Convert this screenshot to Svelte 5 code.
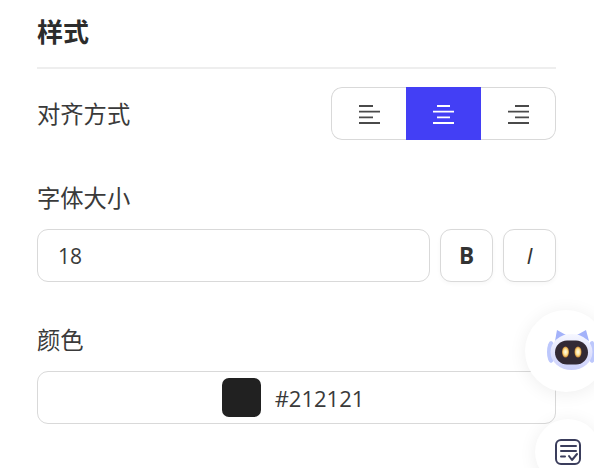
<script lang="ts">
  // Style panel: alignment, font size and colour controls, plus floating helper buttons.
  let align = $state('center');
  let fontSize = $state('18');
  const alignments = [
    { id: 'left', lines: ['M0 1h14', 'M0 6.7h21', 'M0 12.4h14', 'M0 18h21'] },
    { id: 'center', lines: ['M4 1h13', 'M0 6.7h21', 'M4 12.4h13', 'M0 18h21'] },
    { id: 'right', lines: ['M7 1h14', 'M0 6.7h21', 'M7 12.4h14', 'M0 18h21'] },
  ];
</script>

<div class="panel">
  <h2 class="title">样式</h2>

  <div class="row align-row">
    <span class="label">对齐方式</span>
    <div class="segments">
      {#each alignments as a (a.id)}
        <button class="segment" class:active={align === a.id} onclick={() => (align = a.id)} aria-label={a.id}>
          <svg width="21" height="19" viewBox="0 0 21 19" fill="none" stroke="currentColor" stroke-width="1.8">
            {#each a.lines as d}<path {d} />{/each}
          </svg>
        </button>
      {/each}
    </div>
  </div>

  <div class="field size-field">
    <span class="label">字体大小</span>
    <div class="size-row">
      <input class="size-input" bind:value={fontSize} />
      <button class="square bold">B</button>
      <button class="square italic">I</button>
    </div>
  </div>

  <div class="field color-field">
    <span class="label">颜色</span>
    <div class="color-box">
      <span class="swatch"></span>
      <span class="hex">#212121</span>
    </div>
  </div>
</div>

<div class="float bot">
  <svg width="47" height="42" viewBox="0 0 47 42">
    <defs>
      <linearGradient id="head" x1="0" y1="0" x2="0" y2="1">
        <stop offset="0" stop-color="#f6f7ff" />
        <stop offset="1" stop-color="#ccd0fb" />
      </linearGradient>
      <radialGradient id="eye">
        <stop offset="0" stop-color="#fffdf0" />
        <stop offset="0.6" stop-color="#ffe08e" />
        <stop offset="1" stop-color="#c9822c" />
      </radialGradient>
    </defs>
    <path d="M8 11 L10 0 L19 5 Z" fill="#a3b2fa" />
    <path d="M42 11 L39 0 L30 5 Z" fill="#a3b2fa" />
    <ellipse cx="4" cy="22" rx="4" ry="11" fill="#bcc7fc" />
    <ellipse cx="45" cy="22" rx="4" ry="11" fill="#bcc7fc" />
    <ellipse cx="24.5" cy="22" rx="21" ry="18" fill="url(#head)" />
    <rect x="8" y="10.5" width="33" height="24" rx="12" fill="#332a35" />
    <ellipse cx="18.5" cy="22" rx="3.5" ry="5.5" fill="url(#eye)" />
    <ellipse cx="31" cy="22" rx="3.5" ry="5.5" fill="url(#eye)" />
  </svg>
</div>

<div class="float notes">
  <svg width="28" height="28" viewBox="0 0 28 28" fill="none" stroke="#3a3d5c" stroke-width="2" stroke-linecap="round" stroke-linejoin="round">
    <rect x="2" y="2" width="24" height="24" rx="5" />
    <path d="M7 8h15M7 13h15M7 18.5h4M15 18l3 4 5-6" />
  </svg>
</div>

<style>
  :global(body) {
    margin: 0;
    background: #fff;
    overflow: hidden;
    height: 468px;
    font-family: "Open Sans", "Noto Sans CJK SC", sans-serif;
    color: #333;
  }

  .panel {
    padding: 0 38px 0 37px;
  }

  .title {
    margin: 0;
    height: 69px;
    box-sizing: border-box;
    padding: 13px 0 0;
    font-size: 26px;
    line-height: 38px;
    font-weight: 700;
    color: #2c2c2c;
    border-bottom: 2px solid #eeeeee;
  }

  .label {
    font-size: 23.3px;
    line-height: 34px;
    color: #3a3a3a;
  }

  .row {
    display: flex;
    align-items: center;
    justify-content: space-between;
  }

  .align-row {
    margin-top: 18px;
  }

  .segments {
    display: flex;
    height: 53px;
    width: 225px;
    border-radius: 11px;
    overflow: hidden;
  }

  .segment {
    width: 75px;
    box-sizing: border-box;
    padding: 0;
    border: 1px solid #d9d9d9;
    border-width: 1px 0;
    background: #fff;
    color: #4a4a4a;
    display: flex;
    align-items: center;
    justify-content: center;
  }

  .segment svg {
    margin-top: 2px;
  }

  .segment:first-child {
    border-left-width: 1px;
    border-radius: 11px 0 0 11px;
  }

  .segment:last-child {
    border-right-width: 1px;
    border-radius: 0 11px 11px 0;
  }

  .segment.active {
    background: #433ff5;
    border-color: #433ff5;
    color: #fff;
  }

  .field {
    display: flex;
    flex-direction: column;
    gap: 14px;
  }

  .size-field {
    margin-top: 41px;
  }

  .color-field {
    margin-top: 41px;
  }

  .size-row {
    display: flex;
    gap: 10px;
  }

  .size-input {
    flex: 1;
    min-width: 0;
    height: 53px;
    box-sizing: border-box;
    padding: 0 20px;
    border: 1px solid #d9d9d9;
    border-radius: 11px;
    font: inherit;
    font-size: 21px;
    color: #3a3a3a;
    outline: none;
  }

  .square {
    width: 53px;
    height: 53px;
    padding: 0;
    border: 1px solid #d9d9d9;
    border-radius: 11px;
    background: #fff;
    font-family: "Open Sans", sans-serif;
    font-size: 22.5px;
    color: #333;
    box-shadow: 0 2px 4px rgba(0, 0, 0, 0.03);
  }

  .bold {
    font-weight: 700;
  }

  .italic {
    font-style: italic;
  }

  .color-box {
    height: 53px;
    box-sizing: border-box;
    padding-right: 7px;
    border: 1px solid #d9d9d9;
    border-radius: 11px;
    display: flex;
    align-items: center;
    justify-content: center;
    gap: 14px;
  }

  .swatch {
    width: 39px;
    height: 39px;
    border-radius: 7px;
    background: #212121;
  }

  .hex {
    font-size: 22px;
    color: #3a3a3a;
  }

  .float {
    position: absolute;
    background: #fff;
    border-radius: 50%;
    box-shadow: 0 2px 18px rgba(0, 0, 0, 0.07);
    display: flex;
    align-items: center;
  }

  .bot {
    left: 525px;
    top: 310px;
    width: 82px;
    height: 82px;
    padding-left: 22px;
    box-sizing: border-box;
  }

  .notes {
    left: 535px;
    top: 419px;
    width: 66px;
    height: 66px;
    padding-left: 19px;
    box-sizing: border-box;
  }
</style>
